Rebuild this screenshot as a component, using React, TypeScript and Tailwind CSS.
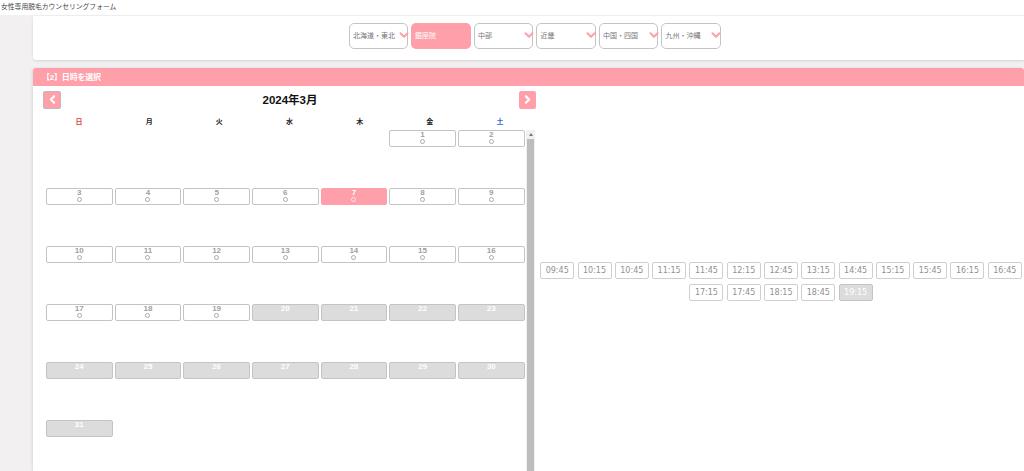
import { ChevronDown, ChevronLeft, ChevronRight } from "lucide-react";

const regions = ["北海道・東北", "銀座院", "中部", "近畿", "中国・四国", "九州・沖縄"];
const weekdays = ["日", "月", "火", "水", "木", "金", "土"];
const times = [
  "09:45", "10:15", "10:45", "11:15", "11:45", "12:15", "12:45", "13:15", "14:45", "15:15", "15:45", "16:15", "16:45",
  "17:15", "17:45", "18:15", "18:45", "19:15",
];

function DayCell({ day }: { day: number }) {
  if (day === 7) {
    return (
      <div className="h-[17px] rounded-[2px] bg-[#fe9fa9] border border-[#fe9fa9] flex flex-col items-center text-white text-[8px] leading-[8px] font-bold">
        <span>7</span>
        <span className="w-[5px] h-[5px] rounded-full border border-white/70" />
      </div>
    );
  }
  if (day >= 20) {
    return (
      <div className="h-[17px] rounded-[2px] bg-[#dcdcdc] border border-[#c4c4c4] flex flex-col items-center text-white text-[8px] leading-[8px] font-bold">
        <span>{day}</span>
      </div>
    );
  }
  return (
    <div className="h-[17px] rounded-[2px] bg-white border border-[#c4c4c4] flex flex-col items-center text-[#a0a0a0] text-[8px] leading-[8px] font-bold">
      <span>{day}</span>
      <span className="w-[5px] h-[5px] rounded-full border border-[#aaaaaa]" />
    </div>
  );
}

export default function App() {
  const cells = [0, 0, 0, 0, 0, ...Array.from({ length: 31 }, (_, i) => i + 1)];

  return (
    <div className="h-[471px] w-[1024px] overflow-hidden flex flex-col bg-[#f2f0f0] font-['Liberation_Sans','Noto_Sans_CJK_JP',sans-serif]">
      <div className="h-[15px] shrink-0 bg-white pl-[1px] text-[6.8px] leading-[13px] text-[#444444]">
        女性専用脱毛カウンセリングフォーム
      </div>

      <div className="flex-1 min-h-0 ml-[33px] flex flex-col">
        <div className="h-[44px] mt-[1px] shrink-0 bg-white rounded-bl-[3px] shadow-[0_1px_3px_rgba(0,0,0,0.12)] flex justify-center gap-[3px] pt-[7px] pl-[12px]">
          {regions.map((name, i) =>
            i === 1 ? (
              <div
                key={name}
                className="w-[59.5px] h-[26px] rounded-[5px] bg-[#fe9fa9] text-white text-[7px] leading-[26px] pl-[4px]"
              >
                {name}
              </div>
            ) : (
              <div
                key={name}
                className="relative w-[59.5px] h-[26px] rounded-[5px] bg-white border border-[#c4c4c4] text-[#777777] text-[7px] leading-[24px] pl-[3.5px]"
              >
                {name}
                <ChevronDown size={14} strokeWidth={3.5} className="absolute right-[-3.5px] top-[4px] text-[#fe9fa9]" />
              </div>
            ),
          )}
        </div>

        <div className="flex-1 min-h-0 mt-[8px] bg-white rounded-t-[3px] shadow-[-1px_0_3px_rgba(0,0,0,0.1)] flex flex-col">
          <div className="h-[18px] shrink-0 bg-[#fe9fa9] rounded-t-[3px] text-white text-[8px] leading-[19px] font-bold pl-[9px] tracking-[-0.2px]">
            【2】日時を選択
          </div>

          <div className="flex-1 min-h-0 flex">
            <div className="w-[502px] shrink-0 flex flex-col">
              <div className="flex items-center justify-between pl-[10px] pt-[4px] h-[23px]">
                <div className="w-[18px] h-[18px] rounded-[2px] bg-[#fe9fa9] border border-[#bcbcbc] flex items-center justify-center">
                  <ChevronLeft size={13} strokeWidth={4} className="text-white" />
                </div>
                <div className="text-[11.5px] leading-[18px] font-bold text-[#111111]">2024年3月</div>
                <div className="w-[17px] h-[18px] -mr-[1px] rounded-[2px] bg-[#fe9fa9] flex items-center justify-center">
                  <ChevronRight size={13} strokeWidth={4} className="text-white" />
                </div>
              </div>

              <div className="grid grid-cols-7 pl-[11px] mt-[5px] h-[15px] text-[7px] leading-[15px] font-bold text-center text-[#222222]">
                {weekdays.map((w, i) => (
                  <div key={w} className={i === 0 ? "text-[#e0413c]" : i === 6 ? "text-[#2f66e0]" : ""}>
                    {w}
                  </div>
                ))}
              </div>

              <div className="flex-1 min-h-0 flex mt-[1px]">
                <div className="flex-1 min-w-0 grid grid-cols-7 gap-x-[2px] auto-rows-[17px] gap-y-[41px] pl-[13px] pr-[1.5px] content-start">
                  {cells.map((d, i) => (d === 0 ? <div key={i} /> : <DayCell key={i} day={d} />))}
                </div>
                <div className="w-[9px] shrink-0 bg-[#f1f1f1] flex flex-col">
                  <div className="h-[9px] shrink-0 flex items-center justify-center">
                    <div className="w-0 h-0 border-x-[2.5px] border-x-transparent border-b-[3px] border-b-[#777777]" />
                  </div>
                  <div className="flex-1 mx-[1px] bg-[#bdbdbd]" />
                </div>
              </div>
            </div>

            <div className="flex-1 min-w-0 flex flex-wrap justify-center content-start gap-x-[3.3px] gap-y-[5px] pt-[176px] pl-[3px]">
              {times.map((t) => (
                <div
                  key={t}
                  className={
                    t === "19:15"
                      ? "w-[34px] h-[17px] rounded-[2px] border border-[#c4c4c4] bg-[#dcdcdc] text-white text-[8px] leading-[15px] text-center font-['DejaVu_Sans',sans-serif]"
                      : "w-[34px] h-[17px] rounded-[2px] border border-[#cfcfcf] bg-white text-[#909090] text-[8px] leading-[15px] text-center font-['DejaVu_Sans',sans-serif]"
                  }
                >
                  {t}
                </div>
              ))}
            </div>
          </div>
        </div>
      </div>
    </div>
  );
}
